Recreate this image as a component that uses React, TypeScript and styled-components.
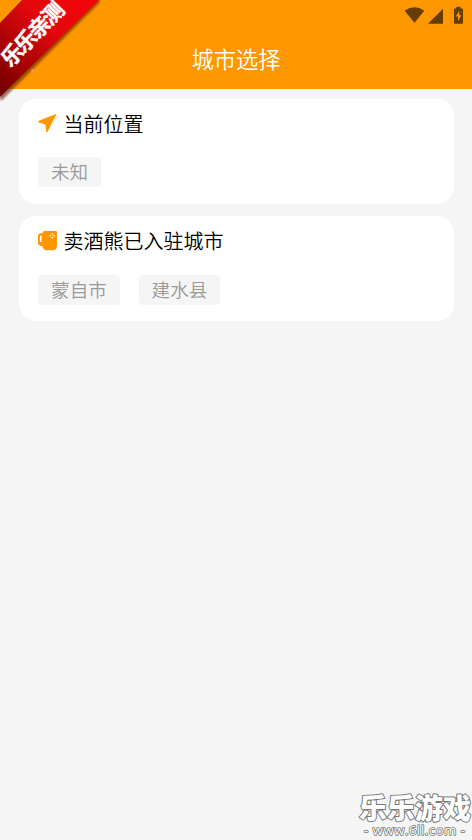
import React from "react";
import styled, { createGlobalStyle } from "styled-components";

const GlobalStyle = createGlobalStyle`
  * { box-sizing: border-box; }
  body {
    margin: 0;
    background: #f5f5f5;
    font-family: "Noto Sans CJK SC", sans-serif;
  }
`;

const Screen = styled.div`
  position: relative;
  display: flex;
  flex-direction: column;
  width: 100%;
  height: 840px;
  overflow: hidden;
  background: #f5f5f5;
`;

const Header = styled.header`
  display: flex;
  flex-direction: column;
  height: 89px;
  background: #ff9800;
`;

const StatusBar = styled.div`
  display: flex;
  justify-content: flex-end;
  height: 30px;
`;

const StatusIcons = styled.svg`
  width: 80px;
  height: 30px;
  fill: #663d00;
`;

const Title = styled.h1`
  margin: 0;
  height: 59px;
  line-height: 57px;
  text-align: center;
  font-size: 22.3px;
  font-weight: 350;
  color: #fff;
`;

const Content = styled.main`
  display: flex;
  flex-direction: column;
  gap: 12px;
  padding: 10px 18px 0 19px;
`;

const Card = styled.section`
  height: 105px;
  padding: 10px 19px;
  border-radius: 17px;
  background: #fff;
`;

const CardHeading = styled.div`
  display: flex;
  align-items: center;
  height: 30px;
  gap: 5.5px;
`;

const HeadingIcon = styled.svg`
  width: 20px;
  height: 22px;
  flex: none;
  fill: #ff9800;
`;

const CardTitle = styled.h2`
  margin: 0;
  line-height: 30px;
  font-size: 20px;
  font-weight: 350;
  color: #000;
`;

const Tags = styled.div<{ $top: number }>`
  display: flex;
  gap: 19px;
  margin-top: ${(p) => p.$top}px;
`;

const Tag = styled.span<{ $width: number }>`
  width: ${(p) => p.$width}px;
  height: 30px;
  line-height: 28px;
  border-radius: 4px;
  background: #f5f5f5;
  text-align: center;
  font-size: 18.6px;
  font-weight: 350;
  color: #999;
`;

const Ribbon = styled.svg`
  position: absolute;
  top: 0;
  left: 0;
  width: 104px;
  height: 104px;
`;

const Watermark = styled.svg`
  position: absolute;
  right: 0;
  bottom: 0;
  width: 122px;
  height: 55px;
`;

const WatermarkText = styled.g`
  fill: #fff;
  stroke: #777;
  stroke-linejoin: round;
  paint-order: stroke;
  text-anchor: middle;
`;

const LocationIcon = () => (
  <HeadingIcon viewBox="0 0 20 22">
    <path d="M18.6 .7 0.3 8.1Q-.3 8.6.6 9.2L7.3 11.4 8.3 18.4Q8.9 19.6 9.8 18.4Z" />
  </HeadingIcon>
);

const MugIcon = () => (
  <HeadingIcon viewBox="0 0 20 22">
    <path
      fillRule="evenodd"
      d="M6.2 1H18Q19 1 19 2.2V15.5Q18.7 19.8 15.5 20.2H8Q5 19.8 4.5 16H2.5Q0 15.5 0 12.8V6Q0 3.5 2.5 3.3H4.5Q4.5 1.3 6.2 1ZM3.6 5.4H3.2Q1.9 5.4 1.9 6.5V11Q1.9 12.2 3.2 12.2H3.6Z"
    />
    <g fill="#fff2d9">
      <circle cx="14.3" cy="3.8" r=".9" />
      <circle cx="12.4" cy="5.7" r=".9" />
      <circle cx="16.2" cy="5.7" r=".9" />
      <circle cx="14.3" cy="7.6" r=".9" />
    </g>
  </HeadingIcon>
);

export default function App() {
  return (
    <Screen>
      <GlobalStyle />
      <Header>
        <StatusBar>
          <StatusIcons viewBox="0 0 80 30">
            <path d="M12.6 10.7Q22.5 4 32.3 10.7L22.5 22.7Z" />
            <path d="M51 8.7V23.7H36Z" />
            <path
              fillRule="evenodd"
              d="M64.3 6.7H68.6V8.4H70.2Q71 8.4 71 9.2V23Q71 23.8 70.2 23.8H62.8Q62 23.8 62 23V9.2Q62 8.4 62.8 8.4H64.3ZM67.2 11 63.8 16.4H66V21L69.4 15.2H67.2Z"
            />
          </StatusIcons>
        </StatusBar>
        <Title>城市选择</Title>
      </Header>
      <Content>
        <Card>
          <CardHeading>
            <LocationIcon />
            <CardTitle>当前位置</CardTitle>
          </CardHeading>
          <Tags $top={18}>
            <Tag $width={63}>未知</Tag>
          </Tags>
        </Card>
        <Card>
          <CardHeading>
            <MugIcon />
            <CardTitle>卖酒熊已入驻城市</CardTitle>
          </CardHeading>
          <Tags $top={19}>
            <Tag $width={82}>蒙自市</Tag>
            <Tag $width={81}>建水县</Tag>
          </Tags>
        </Card>
      </Content>
      <Ribbon viewBox="0 0 104 104">
        <defs>
          <linearGradient id="band" gradientUnits="userSpaceOnUse" x1="0" y1="98" x2="98" y2="0">
            <stop offset="0" stopColor="#690000" />
            <stop offset=".3" stopColor="#a90306" />
            <stop offset=".62" stopColor="#e3080d" />
            <stop offset="1" stopColor="#f40509" />
          </linearGradient>
          <filter id="shade" x="-10%" y="-10%" width="120%" height="120%">
            <feGaussianBlur stdDeviation="1" />
          </filter>
        </defs>
        <path d="M0 25 24 0H100V2L2 100H0Z" fill="#5e2500" opacity=".65" filter="url(#shade)" />
        <path d="M0 23 22 0H99L0 97Z" fill="url(#band)" />
        <text
          transform="translate(32.5 34) rotate(-46)"
          x="0"
          y="8"
          textAnchor="middle"
          fontSize="21.5"
          fontWeight="700"
          fill="#fff"
          stroke="#fff"
          strokeWidth=".4"
          textLength="80"
        >
          乐乐亲测
        </text>
        <circle cx="32.5" cy="70.5" r="1.2" fill="#d6a19b" />
      </Ribbon>
      <Watermark viewBox="0 0 122 55">
        <WatermarkText>
          <text x="65" y="34" fontSize="28" fontWeight="900" strokeWidth="2" textLength="112">
            乐乐游戏
          </text>
          <text
            x="64.5"
            y="50"
            fontFamily="Open Sans, sans-serif"
            fontSize="13"
            fontWeight="400"
            strokeWidth="1.6"
            textLength="101"
          >
            - www.6ll.com -
          </text>
        </WatermarkText>
      </Watermark>
    </Screen>
  );
}
